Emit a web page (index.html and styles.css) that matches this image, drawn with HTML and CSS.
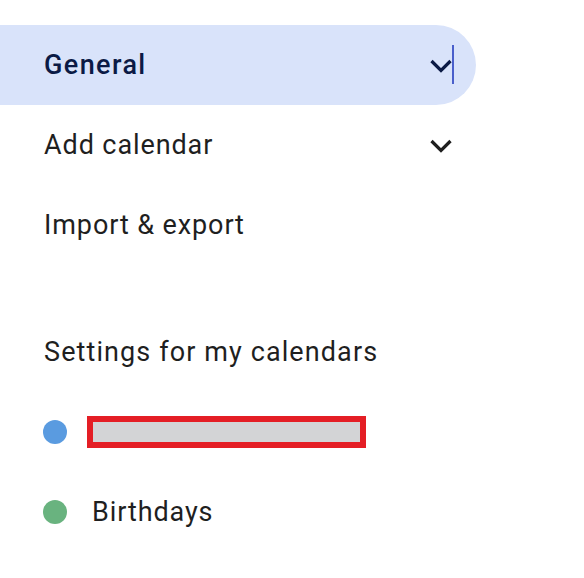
FILE: index.html
```html
<!DOCTYPE html>
<html>
<head>
<meta charset="utf-8">
<link rel="stylesheet" href="styles.css">
</head>
<body>
<nav class="nav">
  <div class="item active">
    <span class="label">General</span>
    <span class="chev"><svg width="22" height="14" viewBox="0 0 22 14"><path d="M1.5 2 L11 11.5 L20.5 2" fill="none" stroke="currentColor" stroke-width="3.2"/></svg></span>
    <span class="caret"></span>
  </div>
  <div class="item">
    <span class="label">Add calendar</span>
    <span class="chev"><svg width="22" height="14" viewBox="0 0 22 14"><path d="M1.5 2 L11 11.5 L20.5 2" fill="none" stroke="currentColor" stroke-width="3.2"/></svg></span>
  </div>
  <div class="item">
    <span class="label">Import &amp; export</span>
  </div>
  <h2 class="heading">Settings for my calendars</h2>
  <div class="cal">
    <span class="dot blue"></span>
    <span class="redacted"></span>
  </div>
  <div class="cal">
    <span class="dot green"></span>
    <span class="cal-name">Birthdays</span>
  </div>
</nav>
</body>
</html>
```

FILE: styles.css
```css
html, body { margin: 0; padding: 0; background: #fff; }
body { font-family: Roboto, "Noto Sans", sans-serif; color: #1f1f1f; }
.nav { width: 476px; padding-top: 25px; display: flex; flex-direction: column; }
.item { height: 80px; display: flex; align-items: center; padding-left: 44px; padding-right: 24px; position: relative; border-radius: 0 40px 40px 0; }
.item.active { background: #d9e3fa; color: #0b1a45; }
.label { flex: 1; font-size: 27px; letter-spacing: 0.9px; }
.active .label { font-weight: 500; letter-spacing: 1.4px; }
.chev { width: 22px; height: 14px; display: flex; color: #1f1f1f; margin-top: 1px; }
.active .chev { color: #0b1a45; }
.caret { position: absolute; left: 452px; top: 20px; width: 2px; height: 39px; background: #4a5fcb; }
.heading { margin: 0; font-weight: 400; font-size: 27px; letter-spacing: 1.1px; padding-left: 44px; height: 80px; display: flex; align-items: center; margin-top: 47px; }
.cal { height: 80px; display: flex; align-items: center; padding-left: 43px; }
.dot { width: 24px; height: 24px; border-radius: 50%; margin-right: 20px; }
.blue { background: #5a9be0; }
.green { background: #69b37f; }
.redacted { width: 267px; height: 20px; border: 6px solid #e41e25; background: #d3d4d6; }
.cal-name { font-size: 27px; letter-spacing: 0.9px; margin-left: 5px; }
```
